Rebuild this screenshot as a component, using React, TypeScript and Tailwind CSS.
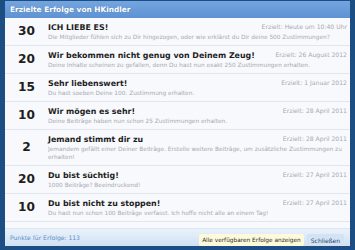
import React from "react";

type Item = { pts: number; title: string; desc: string; date: string };

const items: Item[] = [
  { pts: 30, title: "ICH LIEBE ES!", desc: "Die Mitglieder fühlen sich zu Dir hingezogen, oder wie erklärst du Dir deine 500 Zustimmungen?", date: "Erzielt: Heute um 10:40 Uhr" },
  { pts: 20, title: "Wir bekommen nicht genug von Deinem Zeug!", desc: "Deine Inhalte scheinen zu gefallen, denn Du hast nun exakt 250 Zustimmungen erhalten.", date: "Erzielt: 26 August 2012" },
  { pts: 15, title: "Sehr liebenswert!", desc: "Du hast soeben Deine 100. Zustimmung erhalten.", date: "Erzielt: 1 Januar 2012" },
  { pts: 10, title: "Wir mögen es sehr!", desc: "Deine Beiträge haben nun schon 25 Zustimmungen erhalten.", date: "Erzielt: 28 April 2011" },
  { pts: 2, title: "Jemand stimmt dir zu", desc: "Jemandem gefällt einer Deiner Beiträge. Erstelle weitere Beiträge, um zusätzliche Zustimmungen zu erhalten!", date: "Erzielt: 28 April 2011" },
  { pts: 20, title: "Du bist süchtig!", desc: "1000 Beiträge? Beeindruckend!", date: "Erzielt: 27 April 2011" },
  { pts: 10, title: "Du bist nicht zu stoppen!", desc: "Du hast nun schon 100 Beiträge verfasst. Ich hoffe nicht alle an einem Tag!", date: "Erzielt: 27 April 2011" },
  { pts: 5, title: "Halte durch, es lohnt sich!", desc: "Du hast nun schon 30 Beiträge verfasst.", date: "Erzielt: 27 April 2011" },
];

export default function App() {
  return (
    <div
      className="w-[355px] h-[250px] bg-[#1c4e84] pl-[5px] pr-[5px] pt-[1px] pb-[4px] flex flex-col overflow-hidden"
      style={{ fontFamily: '"DejaVu Sans", Verdana, sans-serif' }}
    >
      <div className="flex-1 flex flex-col bg-[#f8f9fc] overflow-hidden">
        <div className="h-[17px] shrink-0 bg-gradient-to-b from-[#74a5e0] to-[#5e92d2] flex items-center pl-[5px] text-white font-bold text-[7.4px] [text-shadow:0_0_1px_rgba(0,0,0,0.25)]">
          Erzielte Erfolge von HKindler
        </div>
        <div className="flex-1 overflow-hidden">
          {items.map((it, i) => (
            <div key={i} className="flex items-center border-b border-[#e1e6ee] bg-[#f8f9fc]">
              <div className="w-[43px] shrink-0 text-center font-bold text-[12.2px] text-[#1e1e1e] leading-none">
                {it.pts}
              </div>
              <div className="flex-1 pt-[4px] pb-[4px] pr-[3px] min-w-0">
                <div className="flex justify-between items-start">
                  <div className="font-bold text-[7.9px] leading-[11px] text-[#1e1e1e] whitespace-nowrap">{it.title}</div>
                  <div className="text-[6.1px] leading-[9px] text-[#a5aab1] whitespace-nowrap pl-[4px]">{it.date}</div>
                </div>
                <div className="text-[5.83px] leading-[8px] text-[#a5aab1]">{it.desc}</div>
              </div>
            </div>
          ))}
        </div>
        <div className="h-[18px] shrink-0 bg-gradient-to-b from-[#eaf2fa] to-[#cfe1f4] flex items-end justify-between pl-[5px] pr-[6px] border-t border-[#dbe7f4]">
          <div className="text-[6.05px] text-[#5f8fc4] self-center">Punkte für Erfolge: 113</div>
          <div className="flex items-center gap-[3px]">
            <div className="h-[12px] px-[3px] rounded-[2px] bg-[#fdfadc] flex items-center text-[5.8px] text-[#2a2a2a]">
              Alle verfügbaren Erfolge anzeigen
            </div>
            <div className="h-[12px] px-[4px] rounded-[2px] bg-[#d3e3f4] flex items-center text-[6px] text-[#27466d]">
              Schließen
            </div>
          </div>
        </div>
      </div>
    </div>
  );
}
